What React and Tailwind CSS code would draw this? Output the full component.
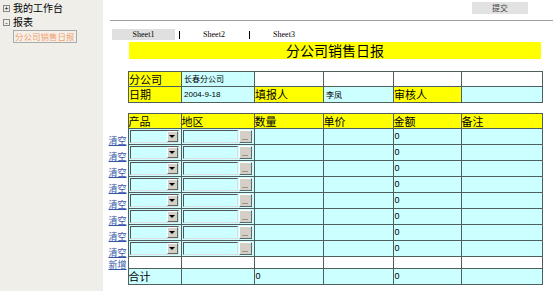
const rows = 8;

function Select() {
  return (
    <div className="flex h-[13px] w-[49px] border border-t-[#555] border-l-[#555] border-b-[#ddd] border-r-[#ddd] bg-[#ccffff]">
      <div className="flex-1" />
      <div className="flex w-[11px] items-center justify-center border border-t-white border-l-white border-b-[#666] border-r-[#666] bg-[#d4d0c8]">
        <div className="h-0 w-0 border-x-[3px] border-t-[3px] border-x-transparent border-t-black" />
      </div>
    </div>
  );
}

function Picker() {
  return (
    <div className="flex h-[14px] items-center gap-[1px]">
      <div className="h-[13px] w-[55px] border border-t-[#555] border-l-[#555] border-b-[#ddd] border-r-[#ddd] bg-[#ccffff]" />
      <div className="flex h-[13px] w-[13px] items-end justify-center border border-t-white border-l-white border-b-[#666] border-r-[#666] bg-[#d4d0c8] pb-[1px] text-[7px] leading-none text-[#333]">
        ...
      </div>
    </div>
  );
}

const cell = "border border-[#4f5f5f] p-0";
const cjk = { fontFamily: '"Noto Sans CJK SC", sans-serif' };
const latin = { fontFamily: '"Liberation Sans", sans-serif' };

export default function App() {
  return (
    <div className="flex h-[291px] w-[553px] bg-white text-black" style={cjk}>
      {/* Sidebar */}
      <div className="w-[103px] shrink-0 bg-[#efeee8] pl-[3px] pt-[1px] text-[10px] leading-[14px]">
        <div className="flex items-center gap-[3px]">
          <span className="flex h-[7px] w-[7px] items-center justify-center border border-[#888] text-[7px] leading-none">+</span>
          <span>我的工作台</span>
        </div>
        <div className="flex items-center gap-[3px]">
          <span className="flex h-[7px] w-[7px] items-center justify-center border border-[#888] text-[7px] leading-none">-</span>
          <span>报表</span>
        </div>
        <div className="ml-[10px] mt-[1px] inline-block border border-[#aaa] bg-[#f5f1ea] px-[1px] text-[8.5px] leading-[11px] text-[#f0a070]">
          分公司销售日报
        </div>
      </div>

      {/* Main */}
      <div className="flex-1">
        <div className="flex h-[20px] justify-end pr-[25px] pt-[2px]">
          <div className="flex h-[12px] w-[56px] items-center justify-center bg-[#e2e2e2] text-[8px] text-[#444]">提交</div>
        </div>
        <div className="ml-[7px] h-px bg-[#a0a0a0]" />

        <div className="ml-[9px] mt-[8px] flex h-[11px] items-center text-[8px] leading-none" style={{ fontFamily: '"Liberation Serif", serif' }}>
          <div className="flex h-[11px] w-[63px] items-center justify-center bg-[#e0e0e0]">Sheet1</div>
          <div className="flex w-[8px] justify-center"><div className="h-[8px] w-px bg-black" /></div>
          <div className="w-[62px] text-center">Sheet2</div>
          <div className="flex w-[8px] justify-center"><div className="h-[8px] w-px bg-black" /></div>
          <div className="w-[62px] text-center">Sheet3</div>
        </div>

        <div className="ml-[26px] mt-[2px] flex h-[17px] w-[412px] items-center justify-center bg-[#ffff00] text-[14px]">
          分公司销售日报
        </div>

        {/* Info table */}
        <table className="ml-[25px] mt-[12px] border-collapse text-[11px] leading-none">
          <tbody>
            <tr className="h-[15px]">
              <td className={`${cell} w-[53px] bg-[#ffff00]`}>分公司</td>
              <td className={`${cell} w-[73px] bg-[#ccffff] pl-[2px] text-[8px]`}>长春分公司</td>
              <td className={`${cell} w-[69px]`} />
              <td className={`${cell} w-[70px]`} />
              <td className={`${cell} w-[68px]`} />
              <td className={`${cell} w-[81px]`} />
            </tr>
            <tr className="h-[16px]">
              <td className={`${cell} bg-[#ffff00]`}>日期</td>
              <td className={`${cell} bg-[#ccffff] pl-[2px] text-[8px]`} style={latin}>2004-9-18</td>
              <td className={`${cell} bg-[#ffff00]`}>填报人</td>
              <td className={`${cell} bg-[#ccffff] pl-[2px] text-[8px]`}>李凤</td>
              <td className={`${cell} bg-[#ffff00]`}>审核人</td>
              <td className={`${cell} bg-[#ccffff]`} />
            </tr>
          </tbody>
        </table>

        {/* Detail table */}
        <table className="ml-[5px] mt-[10px] border-collapse text-[11px] leading-none">
          <tbody>
            <tr className="h-[15px]">
              <td className="w-[20px] p-0" />
              <td className={`${cell} w-[53px] bg-[#ffff00]`}>产品</td>
              <td className={`${cell} w-[73px] bg-[#ffff00]`}>地区</td>
              <td className={`${cell} w-[69px] bg-[#ffff00]`}>数量</td>
              <td className={`${cell} w-[70px] bg-[#ffff00]`}>单价</td>
              <td className={`${cell} w-[68px] bg-[#ffff00]`}>金额</td>
              <td className={`${cell} w-[81px] bg-[#ffff00]`}>备注</td>
            </tr>
            {Array.from({ length: rows }).map((_, i) => (
              <tr key={i} className="h-[16px]">
                <td className="p-0 pr-[1px] text-right align-bottom text-[9px] text-[#3355aa] underline">清空</td>
                <td className={`${cell} bg-[#ccffff] pl-[1px]`}><Select /></td>
                <td className={`${cell} bg-[#ccffff] pl-[1px]`}><Picker /></td>
                <td className={`${cell} bg-[#ccffff]`} />
                <td className={`${cell} bg-[#ccffff]`} />
                <td className={`${cell} bg-[#ccffff] pl-[1px] text-[9px]`} style={latin}>0</td>
                <td className={`${cell} bg-[#ccffff]`} />
              </tr>
            ))}
            <tr className="h-[12px]">
              <td className="p-0 pr-[1px] text-right align-bottom text-[9px] text-[#3355aa] underline">新增</td>
              <td className={`${cell} bg-white`} />
              <td className={`${cell} bg-white`} />
              <td className={`${cell} bg-white`} />
              <td className={`${cell} bg-white`} />
              <td className={`${cell} bg-white`} />
              <td className={`${cell} bg-white`} />
            </tr>
            <tr className="h-[16px]">
              <td className="p-0" />
              <td className={`${cell} bg-[#ccffff]`}>合计</td>
              <td className={`${cell} bg-[#ccffff]`} />
              <td className={`${cell} bg-[#ccffff] pl-[1px] text-[9px]`} style={latin}>0</td>
              <td className={`${cell} bg-[#ccffff]`} />
              <td className={`${cell} bg-[#ccffff] pl-[1px] text-[9px]`} style={latin}>0</td>
              <td className={`${cell} bg-[#ccffff]`} />
            </tr>
          </tbody>
        </table>
      </div>
    </div>
  );
}
